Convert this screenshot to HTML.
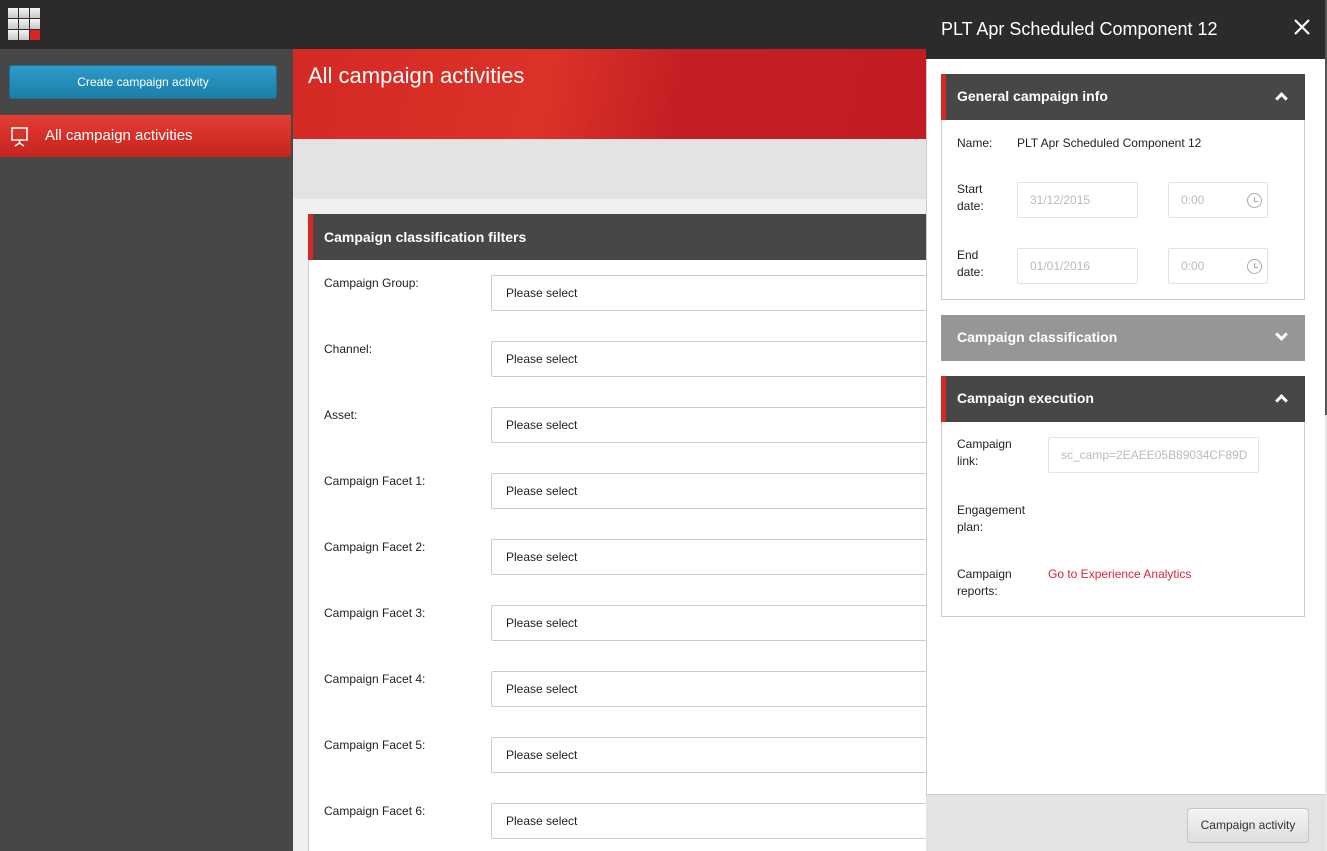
<!DOCTYPE html>
<html><head><meta charset="utf-8"><style>
*{box-sizing:border-box;margin:0;padding:0}
html,body{width:1327px;height:851px;overflow:hidden}
body{font-family:"Liberation Sans",Arial,sans-serif;font-size:12px;color:#222;background:#f0f0f0;position:relative}
.abs{position:absolute}
#top{left:0;top:0;width:926px;height:49px;background:#2b2b2b}
.grid{left:8px;top:8px;width:33px;height:33px;display:grid;grid-template-columns:repeat(3,10px);grid-template-rows:repeat(3,10px);grid-gap:1px}
.grid div{background:linear-gradient(#f4f4f4,#c8c8c8)}
#side{left:0;top:49px;width:293px;height:802px;background:#474747}
.btn{left:9px;top:65px;width:268px;height:34px;border-radius:3px;background:linear-gradient(#2c9bcb,#1c7fa8);border:1px solid #1a6f94;color:#fff;text-align:center;line-height:32px;font-size:12px}
.nav{left:0;top:115px;width:291px;height:42px;background:linear-gradient(#e23e35,#c6231f);color:#fff;font-size:15px;line-height:42px;padding-left:45px}
#hero{left:293px;top:49px;width:633px;height:90px;background:linear-gradient(100deg,#d52924 0%,#dc3228 40%,#c42024 60%,#c21c22 100%);color:#fff;font-size:22px;padding:14px 15px}
#band{left:293px;top:139px;width:633px;height:60px;background:#e3e3e3}
#card{left:308px;top:214px;width:618px;height:640px;background:#fff;border:1px solid #ccc;border-right:none}
.ch{left:308px;top:214px;width:618px;height:46px;background:#474747;border-left:5px solid #d42a23;color:#fff;font-weight:bold;font-size:14px;line-height:46px;padding-left:11px}
.lab{left:324px;font-size:12px}
.sel{left:491px;width:435px;height:36px;border:1px solid #ccc;border-right:none;border-radius:2px 0 0 2px;background:#fff;padding-left:14px;line-height:34px;font-size:12px}
#panel{left:926px;top:0;width:399px;height:851px;background:#fff;border-left:1px solid #ccc}
.ph{left:926px;top:0;width:399px;height:59px;background:#2b2b2b;color:#fff;font-size:18px;line-height:58px;padding-left:15px}
.sb{left:1325px;top:0;width:2px;height:851px;background:#e8e8e8}
.sbt{left:1325px;top:0;width:2px;height:415px;background:#555}
.sec{left:941px;width:364px;height:46px;background:#474747;border-left:5px solid #d42a23;color:#fff;font-weight:bold;font-size:14px;line-height:45px;padding-left:11px}
.box{left:941px;width:364px;border:1px solid #ccc;border-top:none;background:#fff}
.pl{left:957px;font-size:12px;line-height:17px}
.inp{height:36px;border:1px solid #e3e3e3;border-radius:2px;color:#bbb;padding-left:12px;line-height:34px;font-size:12px}
.foot{left:926px;top:794px;width:399px;height:57px;background:#e3e3e3;border-top:1px solid #ccc}
.fb{left:1187px;top:808px;width:122px;height:35px;border:1px solid #c6c6c6;border-radius:4px;background:linear-gradient(#f4f4f4,#dedede);text-align:center;line-height:33px;color:#333}
.clk{position:absolute;right:5px;top:10px;width:15px;height:15px;border:1px solid #aaa;border-radius:50%}
.clk:after{content:"";position:absolute;left:6px;top:3px;width:3px;height:4px;border-left:1px solid #aaa;border-bottom:1px solid #aaa}
.chev{position:absolute;right:19px;top:20px;width:9px;height:9px;border-left:3px solid #fff;border-top:3px solid #fff;transform:rotate(45deg)}
.chev.d{top:15px;transform:rotate(225deg)}
</style></head><body>
<div class="abs" id="top"></div>
<div class="abs grid"><div></div><div></div><div></div><div></div><div></div><div></div><div></div><div></div><div style="background:#d8261e"></div></div>
<div class="abs" id="side"></div>
<div class="abs btn">Create campaign activity</div>
<div class="abs nav">All campaign activities</div>
<svg class="abs" style="left:10px;top:127px" width="20" height="20" viewBox="0 0 20 20" fill="none" stroke="#fff" stroke-width="1.5"><rect x="2" y="1" width="15" height="12"/><path d="M9.5 13v3M5 19l4.5-3 4.5 3"/></svg>
<div class="abs" id="hero">All campaign activities</div>
<div class="abs" id="band"></div>
<div class="abs" id="card"></div>
<div class="abs ch">Campaign classification filters</div>
<div class="abs lab" style="top:276px">Campaign Group:</div><div class="abs sel" style="top:275px">Please select</div>
<div class="abs lab" style="top:342px">Channel:</div><div class="abs sel" style="top:341px">Please select</div>
<div class="abs lab" style="top:408px">Asset:</div><div class="abs sel" style="top:407px">Please select</div>
<div class="abs lab" style="top:474px">Campaign Facet 1:</div><div class="abs sel" style="top:473px">Please select</div>
<div class="abs lab" style="top:540px">Campaign Facet 2:</div><div class="abs sel" style="top:539px">Please select</div>
<div class="abs lab" style="top:606px">Campaign Facet 3:</div><div class="abs sel" style="top:605px">Please select</div>
<div class="abs lab" style="top:672px">Campaign Facet 4:</div><div class="abs sel" style="top:671px">Please select</div>
<div class="abs lab" style="top:738px">Campaign Facet 5:</div><div class="abs sel" style="top:737px">Please select</div>
<div class="abs lab" style="top:804px">Campaign Facet 6:</div><div class="abs sel" style="top:803px">Please select</div>

<div class="abs" id="panel"></div>
<div class="abs ph">PLT Apr Scheduled Component 12</div>
<svg class="abs" style="left:1294px;top:19px" width="16" height="16" viewBox="0 0 16 16" stroke="#fff" stroke-width="2.2"><path d="M1 1l14 14M15 1L1 15"/></svg>
<div class="abs sb"></div><div class="abs sbt"></div>

<div class="abs sec" style="top:74px">General campaign info<div class="chev"></div></div>
<div class="abs box" style="top:120px;height:180px"></div>
<div class="abs pl" style="top:135px">Name:</div>
<div class="abs pl" style="left:1017px;top:135px">PLT Apr Scheduled Component 12</div>
<div class="abs pl" style="top:181px">Start<br>date:</div>
<div class="abs inp" style="left:1017px;top:182px;width:121px">31/12/2015</div>
<div class="abs inp" style="left:1168px;top:182px;width:100px">0:00<span class="clk"></span></div>
<div class="abs pl" style="top:247px">End<br>date:</div>
<div class="abs inp" style="left:1017px;top:248px;width:121px">01/01/2016</div>
<div class="abs inp" style="left:1168px;top:248px;width:100px">0:00<span class="clk"></span></div>

<div class="abs sec" style="top:315px;background:#969696;border-left-color:#969696">Campaign classification<div class="chev d"></div></div>

<div class="abs sec" style="top:376px">Campaign execution<div class="chev"></div></div>
<div class="abs box" style="top:422px;height:195px"></div>
<div class="abs pl" style="top:436px">Campaign<br>link:</div>
<div class="abs inp" style="left:1048px;top:437px;width:211px;overflow:hidden;white-space:nowrap">sc_camp=2EAEE05B89034CF89D</div>
<div class="abs pl" style="top:502px">Engagement<br>plan:</div>
<div class="abs pl" style="top:566px">Campaign<br>reports:</div>
<div class="abs pl" style="left:1048px;top:566px;color:#d8263c">Go to Experience Analytics</div>

<div class="abs foot"></div>
<div class="abs fb">Campaign activity</div>
</body></html>
